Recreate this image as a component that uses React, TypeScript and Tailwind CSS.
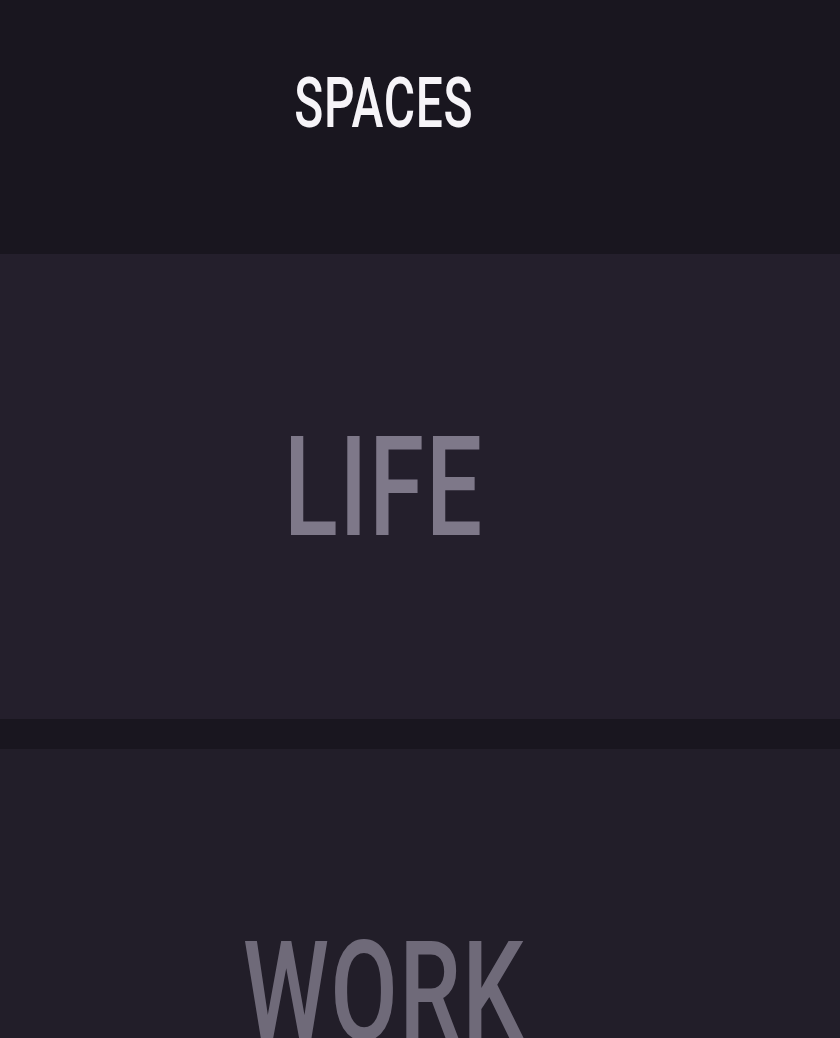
const sections = [
  { label: 'LIFE', height: 'h-[465px]', bg: 'bg-[#241f2c]', text: 'text-[#7e7889]', scale: 'scale-x-[0.715]' },
  { label: 'WORK', height: 'h-[485px]', bg: 'bg-[#221e29]', text: 'text-[#6f6a79]', scale: 'scale-x-[0.70]' },
]

export default function App() {
  return (
    <main className="min-h-screen bg-[#19161f] font-['Roboto',sans-serif] overflow-hidden">
      <div className="w-[768px]">
        {/* Header */}
        <header className="h-[254px] pt-[68px] flex justify-center">
          <h1 className="inline-block text-[70px] leading-none font-medium tracking-[1px] text-[#f6f4f8] scale-x-[0.685]">
            SPACES
          </h1>
        </header>
      </div>

      {/* Space cards */}
      <div className="flex flex-col gap-[30px]">
        {sections.map((s) => (
          <section key={s.label} className={`${s.height} ${s.bg} w-full`}>
            <div className="w-[768px] h-full flex items-center justify-center">
              <span className={`inline-block text-[140px] leading-none font-medium tracking-[2px] ${s.text} ${s.scale}`}>
                {s.label}
              </span>
            </div>
          </section>
        ))}
      </div>
    </main>
  )
}
